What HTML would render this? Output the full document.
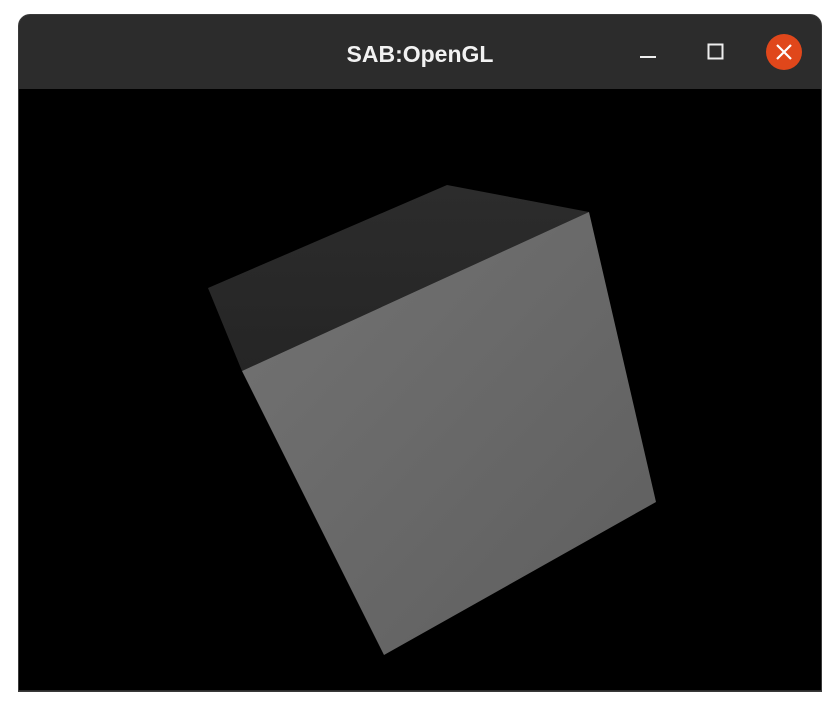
<!DOCTYPE html>
<html><head><meta charset="utf-8"><style>
html,body{margin:0;padding:0;background:#fff;width:840px;height:710px;overflow:hidden}
.win{position:absolute;left:18px;top:14px;width:804px;height:678px;background:#2c2c2c;border-radius:12px 12px 0 0;box-sizing:border-box;border:1px solid #3a3a3a}
.title{position:absolute;top:40px;text-align:center;color:#f2f2f2;font:bold 23px/28px "Liberation Sans",sans-serif;letter-spacing:0}
.content{position:absolute;left:19px;top:89px;width:802px;height:601px;background:#000}
</style></head><body>
<div class="win"></div>
<div class="title" style="left:18px;width:804px">SAB:OpenGL</div>
<svg style="position:absolute;left:0;top:0" width="840" height="710">
<line x1="640" y1="57" x2="656" y2="57" stroke="#eee" stroke-width="2"/>
<rect x="708.5" y="44.5" width="14" height="14" fill="none" stroke="#eee" stroke-width="2"/>
<circle cx="784" cy="52" r="18" fill="#e0471b"/>
<path d="M777 45 L791 59 M791 45 L777 59" stroke="#fff" stroke-width="2.2"/>
</svg>
<div class="content"></div>
<svg style="position:absolute;left:0;top:0" width="840" height="710">
<defs>
<linearGradient id="g" x1="0" y1="0" x2="1" y2="1">
<stop offset="0" stop-color="#737373"/><stop offset="1" stop-color="#5e5e5e"/>
</linearGradient>
<linearGradient id="t" x1="0" y1="0" x2="0" y2="1">
<stop offset="0" stop-color="#2c2c2c"/><stop offset="1" stop-color="#252525"/>
</linearGradient>
</defs>
<polygon points="208,288 447,185 589,212 242,371" fill="url(#t)"/>
<polygon points="242,371 589,212 656,502 384,655" fill="url(#g)"/>
</svg>
</body></html>
